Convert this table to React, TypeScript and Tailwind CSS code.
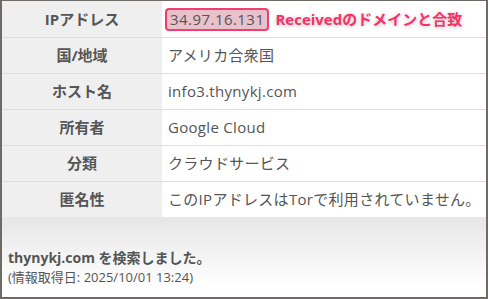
const rows: { label: string; value: React.ReactNode }[] = [
  {
    label: "IPアドレス",
    value: (
      <span className="flex items-center">
        <span className="-ml-[3px] rounded-[4px] border-2 border-[#f23d6e] bg-[#e9c1cb] px-[3px] leading-[19px] tracking-[0.45px]">
          34.97.16.131
        </span>
        <span className="ml-[6px] font-bold tracking-normal text-[#fb2f66] [text-shadow:0_1px_4px_rgba(0,0,0,0.25)]">
          Receivedのドメインと合致
        </span>
      </span>
    ),
  },
  { label: "国/地域", value: "アメリカ合衆国" },
  { label: "ホスト名", value: "info3.thynykj.com" },
  { label: "所有者", value: "Google Cloud" },
  { label: "分類", value: "クラウドサービス" },
  { label: "匿名性", value: "このIPアドレスはTorで利用されていません。" },
];

function InfoTable() {
  return (
    <div className="shadow-[0_4px_12px_rgba(0,0,0,0.25)]">
      {rows.map((row, i) => (
        <div
          key={row.label}
          className={`flex h-[36px] ${i > 0 ? "border-t border-[#dddddd]" : ""}`}
        >
          <div className="flex w-[160px] items-center justify-center bg-[#efefef] font-bold">
            {row.label}
          </div>
          <div className="flex flex-1 items-center bg-white pl-[6px] tracking-[0.3px]">
            {row.value}
          </div>
        </div>
      ))}
    </div>
  );
}

export default function App() {
  return (
    <div
      className="h-[299px] w-[488px] overflow-hidden border-x-2 border-t border-b-2 border-[#6e6a66] bg-white text-[15px] text-[#555555]"
      style={{ fontFamily: '"Open Sans", "Noto Sans CJK JP", sans-serif' }}
    >
      <InfoTable />
      <div className="bg-gradient-to-b from-[#e6e6e6] to-white px-[6px] pt-[31px]">
        <p className="text-[14px] font-bold leading-[20px]">thynykj.com を検索しました。</p>
        <p className="text-[13px] leading-[18px]">(情報取得日: 2025/10/01 13:24)</p>
      </div>
    </div>
  );
}
